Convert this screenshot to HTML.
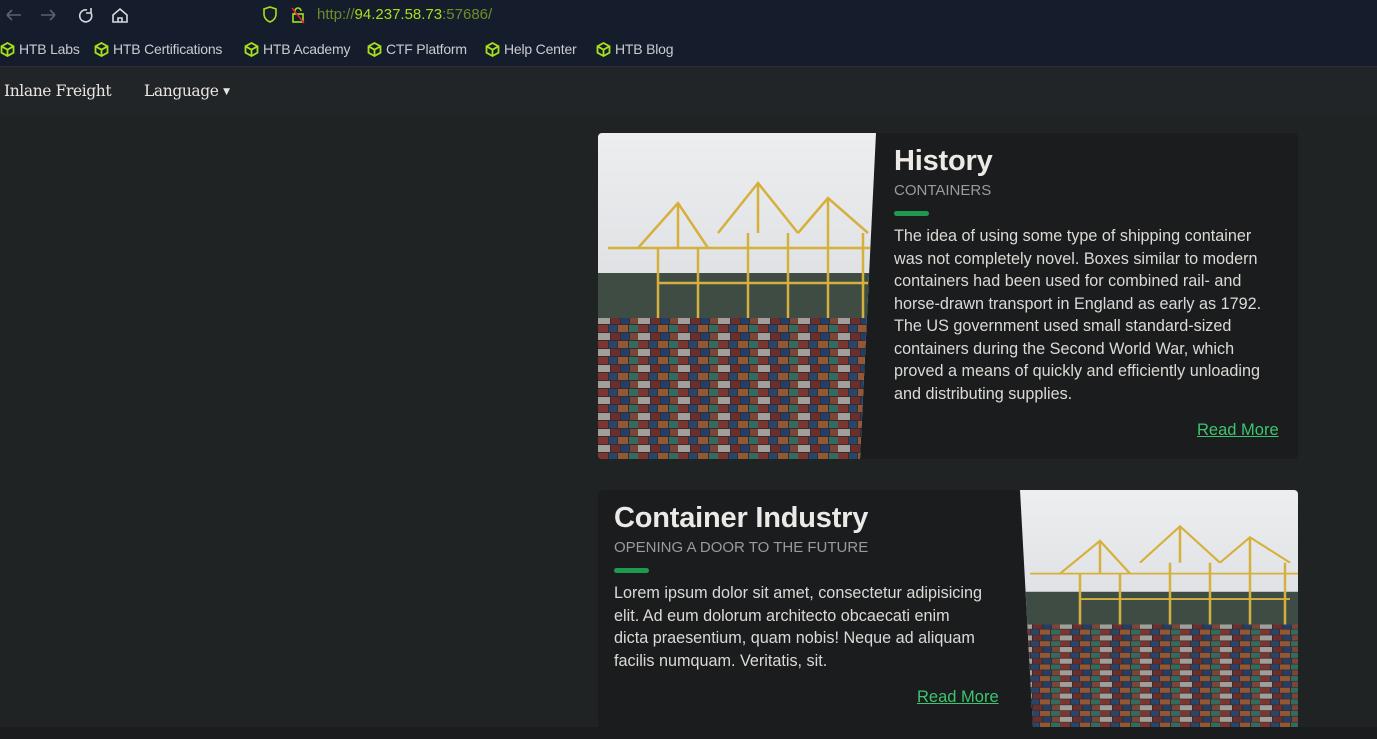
<!DOCTYPE html>
<html><head><meta charset="utf-8"><style>
*{margin:0;padding:0;box-sizing:border-box}
body{width:1377px;height:739px;overflow:hidden;background:#1b1c1d;font-family:"Liberation Sans",sans-serif;position:relative}
.top{position:absolute;left:0;top:0;width:1377px;height:66px;background:#151c2b}
.nav{position:absolute;left:0;top:66px;width:1377px;height:51px;background:#222527;border-top:1px solid #2a2e31}
.main{position:absolute;left:0;top:117px;width:1377px;height:610px;background:#202324}
.bm{position:absolute;top:41px;color:#c9ccd2;font-size:14px;letter-spacing:-0.2px;display:flex;align-items:center}
.bm svg{margin-right:4px}
.card{position:absolute;background:#1b1c1e;border-radius:4px;overflow:hidden}
h2{font-family:"Liberation Sans",sans-serif;font-weight:bold;color:#eceae6;font-size:29px;letter-spacing:-0.2px}
.sub{color:#9a9a9a;font-size:15px;margin-top:4px}
.bar{width:35px;height:5px;background:#1e9a50;border-radius:3px;margin-top:12px}
p{color:#dcdad6;font-size:16.2px;line-height:22.5px;margin-top:9px}
a{color:#3dc46e;font-size:16.5px;position:absolute}
</style></head><body>
<div class="top">
<svg style="position:absolute;left:4px;top:6px" width="140" height="18" fill="none" stroke-width="1.6">
<path d="M3 9h14M3 9l5-5M3 9l5 5" stroke="#5a6272"/>
<path d="M37 9h14M51 9l-5-5M51 9l-5 5" stroke="#5a6272"/>
<path d="M83 4a6 6 0 1 0 4 3M87 2v5h-5" stroke="#d6d9df"/>
<path d="M109 9l7-6 7 6v7h-14z M114 16v-4h4v4" stroke="#d6d9df"/>
</svg>
<svg style="position:absolute;left:262px;top:5px" width="50" height="20" fill="none" stroke-width="1.6">
<path d="M8 2l6 2v5c0 4-3 7-6 8-3-1-6-4-6-8V4z" stroke="#a5e01b"/>
<rect x="31" y="9" width="10" height="8" stroke="#a5e01b"/><path d="M33 9V6a3 3 0 0 1 6 0" stroke="#a5e01b"/><path d="M30 3l12 15" stroke="#e0203a"/>
</svg>
<div style="position:absolute;left:317px;top:6px;font-size:15px;color:#6d8e28">http://<span style="color:#a5e01b">94.237.58.73</span>:57686/</div>
<div class="bm" style="left:0"><svg width="15" height="15" fill="none" stroke="#a5e01b" stroke-width="1.8"><path d="M7.5 1l6 3.3v6.4L7.5 14 1.5 10.7V4.3zM1.5 4.3l6 3.4 6-3.4M7.5 7.7V14"/></svg>HTB Labs</div>
<div class="bm" style="left:94px"><svg width="15" height="15" fill="none" stroke="#a5e01b" stroke-width="1.8"><path d="M7.5 1l6 3.3v6.4L7.5 14 1.5 10.7V4.3zM1.5 4.3l6 3.4 6-3.4M7.5 7.7V14"/></svg>HTB Certifications</div>
<div class="bm" style="left:244px"><svg width="15" height="15" fill="none" stroke="#a5e01b" stroke-width="1.8"><path d="M7.5 1l6 3.3v6.4L7.5 14 1.5 10.7V4.3zM1.5 4.3l6 3.4 6-3.4M7.5 7.7V14"/></svg>HTB Academy</div>
<div class="bm" style="left:367px"><svg width="15" height="15" fill="none" stroke="#a5e01b" stroke-width="1.8"><path d="M7.5 1l6 3.3v6.4L7.5 14 1.5 10.7V4.3zM1.5 4.3l6 3.4 6-3.4M7.5 7.7V14"/></svg>CTF Platform</div>
<div class="bm" style="left:485px"><svg width="15" height="15" fill="none" stroke="#a5e01b" stroke-width="1.8"><path d="M7.5 1l6 3.3v6.4L7.5 14 1.5 10.7V4.3zM1.5 4.3l6 3.4 6-3.4M7.5 7.7V14"/></svg>Help Center</div>
<div class="bm" style="left:596px"><svg width="15" height="15" fill="none" stroke="#a5e01b" stroke-width="1.8"><path d="M7.5 1l6 3.3v6.4L7.5 14 1.5 10.7V4.3zM1.5 4.3l6 3.4 6-3.4M7.5 7.7V14"/></svg>HTB Blog</div>
</div>
<div class="nav">
<div style="position:absolute;left:4px;top:15px;font-family:'DejaVu Serif','Liberation Serif',serif;font-size:15.5px;color:#e8e6e2;letter-spacing:-0.4px">Inlane Freight</div>
<div style="position:absolute;left:144px;top:15px;font-family:'DejaVu Serif','Liberation Serif',serif;font-size:15.5px;color:#e8e6e2;letter-spacing:-0.4px">Language <span style="font-size:9px;vertical-align:2px">▼</span></div>
</div>
<div class="main"></div>

<svg width="0" height="0" style="position:absolute"><defs>
<linearGradient id="sky" x1="0" y1="0" x2="0" y2="1"><stop offset="0" stop-color="#eceef0"/><stop offset="1" stop-color="#cfd2d5"/></linearGradient>
<pattern id="cont" width="40" height="16" patternUnits="userSpaceOnUse">
<rect width="40" height="16" fill="#3e3436"/>
<rect x="0" y="0" width="10" height="7" fill="#8e3e36"/><rect x="11" y="0" width="8" height="7" fill="#2e4f7a"/><rect x="20" y="0" width="10" height="7" fill="#a8643c"/><rect x="31" y="0" width="9" height="7" fill="#3b7a6c"/>
<rect x="0" y="8" width="12" height="7" fill="#b8b6b2"/><rect x="13" y="8" width="9" height="7" fill="#7a3530"/><rect x="23" y="8" width="8" height="7" fill="#27477a"/><rect x="32" y="8" width="8" height="7" fill="#8d5040"/>
</pattern>
<symbol id="port" viewBox="0 0 280 326" preserveAspectRatio="none">
<rect width="280" height="326" fill="url(#sky)"/>
<rect x="0" y="140" width="280" height="45" fill="#3e4c44"/>
<g stroke="#d6b03c" stroke-width="2.5" fill="none">
<path d="M10 115h270M60 115v75M100 115v75M150 100v90M190 100v90M230 100v90M265 100v90M40 115l40-45 30 45M120 100l40-50 40 50M200 100l30-35 40 35"/>
<path d="M80 70v45M160 50v50M230 65v35M60 150h210"/>
</g>
<rect x="0" y="185" width="280" height="141" fill="url(#cont)"/>
<rect x="0" y="185" width="280" height="141" fill="#000" opacity="0.12"/>
</symbol>
</defs></svg>

<div class="card" style="left:598px;top:133px;width:700px;height:326px">
<svg style="position:absolute;left:0;top:0;clip-path:polygon(0 0,278px 0,262px 326px,0 326px)" width="280" height="326"><use href="#port"/></svg>
<div style="position:absolute;left:296px;top:12px;width:390px">
<h2>History</h2><div class="sub">CONTAINERS</div><div class="bar"></div>
<p>The idea of using some type of shipping container was not completely novel. Boxes similar to modern containers had been used for combined rail- and horse-drawn transport in England as early as 1792. The US government used small standard-sized containers during the Second World War, which proved a means of quickly and efficiently unloading and distributing supplies.</p>
</div>
<a style="left:599px;top:288px;text-decoration:underline">Read More</a>
</div>

<div class="card" style="left:598px;top:490px;width:700px;height:237px;border-radius:4px 4px 0 0">
<svg style="position:absolute;left:422px;top:0;clip-path:polygon(0 0,280px 0,280px 237px,13px 237px)" width="280" height="237"><use href="#port"/></svg>
<div style="position:absolute;left:16px;top:12px;width:372px">
<h2>Container Industry</h2><div class="sub">OPENING A DOOR TO THE FUTURE</div><div class="bar"></div>
<p>Lorem ipsum dolor sit amet, consectetur adipisicing elit. Ad eum dolorum architecto obcaecati enim dicta praesentium, quam nobis! Neque ad aliquam facilis numquam. Veritatis, sit.</p>
</div>
<a style="left:319px;top:198px;text-decoration:underline">Read More</a>
</div>
</body></html>
